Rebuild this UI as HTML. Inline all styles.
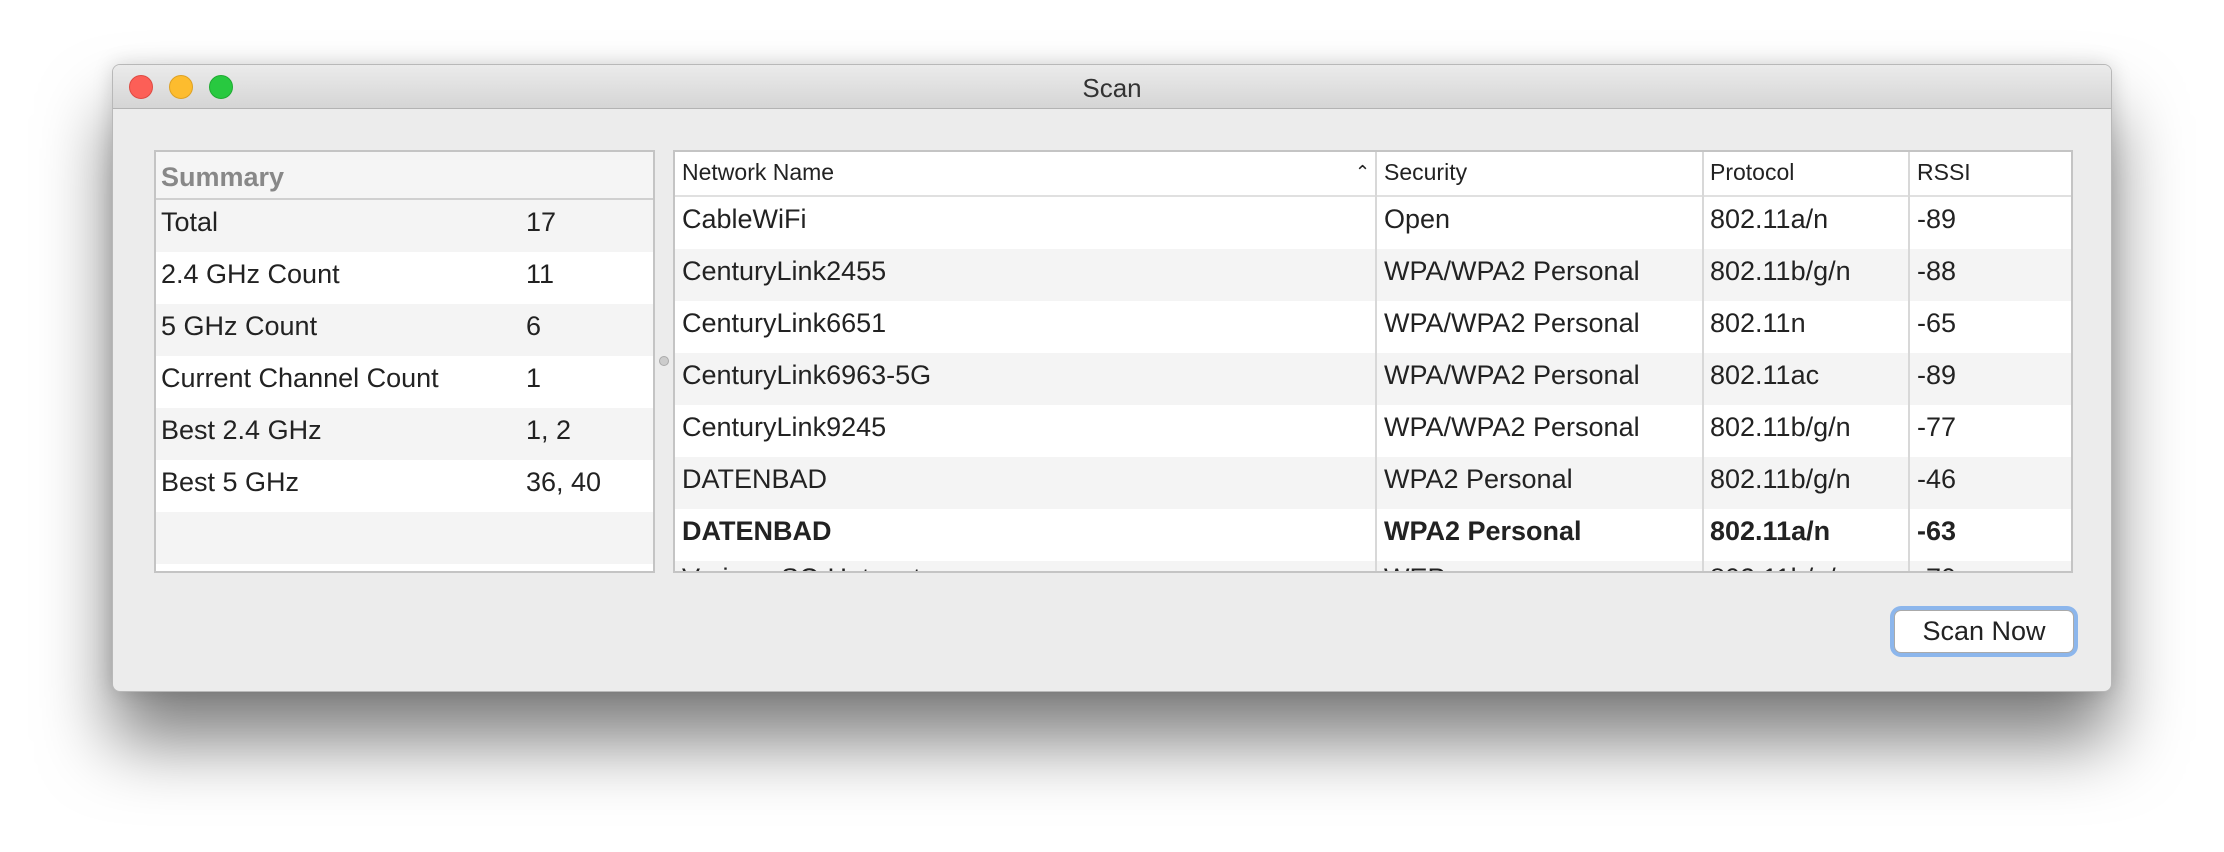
<!DOCTYPE html>
<html><head><style>
*{margin:0;padding:0;box-sizing:border-box}
body{width:2224px;height:852px;background:#fff;position:relative;overflow:hidden;font-family:"Liberation Sans",sans-serif;color:#222}
.win{position:absolute;left:112px;top:64px;width:2000px;height:628px;background:#ececec;border-radius:8px;border:1px solid #b8b8b8;box-shadow:0 50px 70px rgba(0,0,0,0.5),0 0 20px rgba(0,0,0,0.15);overflow:hidden}
.tb{position:absolute;left:0;top:0;width:100%;height:44px;background:linear-gradient(#ebebeb,#d5d5d5);border-bottom:1px solid #b3b3b3}
.tl{position:absolute;top:10px;width:24px;height:24px;border-radius:50%}
.title{position:absolute;width:100%;text-align:center;top:8px;font-size:26px;color:#333}
.box{position:absolute;background:#fff;border:2px solid #c4c4c4;overflow:hidden}
.row{position:absolute;left:0;width:100%;height:52px;font-size:27px;line-height:44px}
.g{background:#f4f4f4}
.c{position:absolute;top:0;white-space:nowrap}
.b{font-weight:bold}
.vl{position:absolute;top:0;width:2px;height:100%;background:#d8d8d8}
</style></head><body>
<div class="win">
 <div class="tb">
  <div class="tl" style="left:16px;background:#fc5f57;border:1px solid #de4a42"></div>
  <div class="tl" style="left:56px;background:#fdbc2e;border:1px solid #dea123"></div>
  <div class="tl" style="left:96px;background:#28c940;border:1px solid #1fab32"></div>
  <div class="title">Scan</div>
 </div>
 <div class="box" style="left:41px;top:85px;width:501px;height:423px;background:#f5f5f5">
  <div style="position:absolute;left:0;top:0;width:100%;height:48px;background:#f5f5f5;border-bottom:2px solid #d0d0d0;font-size:27px;font-weight:bold;color:#888;line-height:50px;padding-left:5px">Summary</div>
  <div class="row g" style="top:48px"><span class="c" style="left:5px">Total</span><span class="c" style="left:370px">17</span></div>
  <div class="row" style="top:100px;background:#fff"><span class="c" style="left:5px">2.4 GHz Count</span><span class="c" style="left:370px">11</span></div>
  <div class="row g" style="top:152px"><span class="c" style="left:5px">5 GHz Count</span><span class="c" style="left:370px">6</span></div>
  <div class="row" style="top:204px;background:#fff"><span class="c" style="left:5px">Current Channel Count</span><span class="c" style="left:370px">1</span></div>
  <div class="row g" style="top:256px"><span class="c" style="left:5px">Best 2.4 GHz</span><span class="c" style="left:370px">1, 2</span></div>
  <div class="row" style="top:308px;background:#fff"><span class="c" style="left:5px">Best 5 GHz</span><span class="c" style="left:370px">36, 40</span></div>
  <div class="row g" style="top:360px"></div>
  <div class="row" style="top:412px;background:#fff"></div>
 </div>
 <div style="position:absolute;left:546px;top:291px;width:10px;height:10px;border-radius:50%;background:#ccc;border:1px solid #aaa"></div>
 <div class="box" style="left:560px;top:85px;width:1400px;height:423px">
  <div style="position:absolute;left:0;top:0;width:100%;height:45px;background:#fff;border-bottom:2px solid #e0e0e0;font-size:23px;line-height:40px">
   <span class="c" style="left:7px">Network Name</span>
   <span class="c" style="left:680px;font-size:18px">&#8963;</span>
   <span class="c" style="left:709px">Security</span>
   <span class="c" style="left:1035px">Protocol</span>
   <span class="c" style="left:1242px">RSSI</span>
  </div>
  <div style="position:absolute;left:0;top:45px;width:100%;height:380px">
   <div class="row" style="top:0"><span class="c" style="left:7px">CableWiFi</span><span class="c" style="left:709px">Open</span><span class="c" style="left:1035px">802.11a/n</span><span class="c" style="left:1242px">-89</span></div>
   <div class="row g" style="top:52px"><span class="c" style="left:7px">CenturyLink2455</span><span class="c" style="left:709px">WPA/WPA2 Personal</span><span class="c" style="left:1035px">802.11b/g/n</span><span class="c" style="left:1242px">-88</span></div>
   <div class="row" style="top:104px"><span class="c" style="left:7px">CenturyLink6651</span><span class="c" style="left:709px">WPA/WPA2 Personal</span><span class="c" style="left:1035px">802.11n</span><span class="c" style="left:1242px">-65</span></div>
   <div class="row g" style="top:156px"><span class="c" style="left:7px">CenturyLink6963-5G</span><span class="c" style="left:709px">WPA/WPA2 Personal</span><span class="c" style="left:1035px">802.11ac</span><span class="c" style="left:1242px">-89</span></div>
   <div class="row" style="top:208px"><span class="c" style="left:7px">CenturyLink9245</span><span class="c" style="left:709px">WPA/WPA2 Personal</span><span class="c" style="left:1035px">802.11b/g/n</span><span class="c" style="left:1242px">-77</span></div>
   <div class="row g" style="top:260px"><span class="c" style="left:7px">DATENBAD</span><span class="c" style="left:709px">WPA2 Personal</span><span class="c" style="left:1035px">802.11b/g/n</span><span class="c" style="left:1242px">-46</span></div>
   <div class="row b" style="top:312px"><span class="c" style="left:7px">DATENBAD</span><span class="c" style="left:709px">WPA2 Personal</span><span class="c" style="left:1035px">802.11a/n</span><span class="c" style="left:1242px">-63</span></div>
   <div class="row g" style="top:364px;line-height:34px"><span class="c" style="left:7px">Verizon-SC-Hotspot</span><span class="c" style="left:709px">WEP</span><span class="c" style="left:1035px">802.11b/g/n</span><span class="c" style="left:1242px">-70</span></div>
  </div>
  <div class="vl" style="left:700px"></div>
  <div class="vl" style="left:1027px"></div>
  <div class="vl" style="left:1233px"></div>
 </div>
 <div style="position:absolute;left:1781px;top:545px;width:180px;height:43px;border-radius:7px;background:#fff;border:1px solid #aaa;box-shadow:0 0 0 4px #8cb6ec;font-size:27px;line-height:41px;text-align:center">Scan Now</div>
</div>
</body></html>
